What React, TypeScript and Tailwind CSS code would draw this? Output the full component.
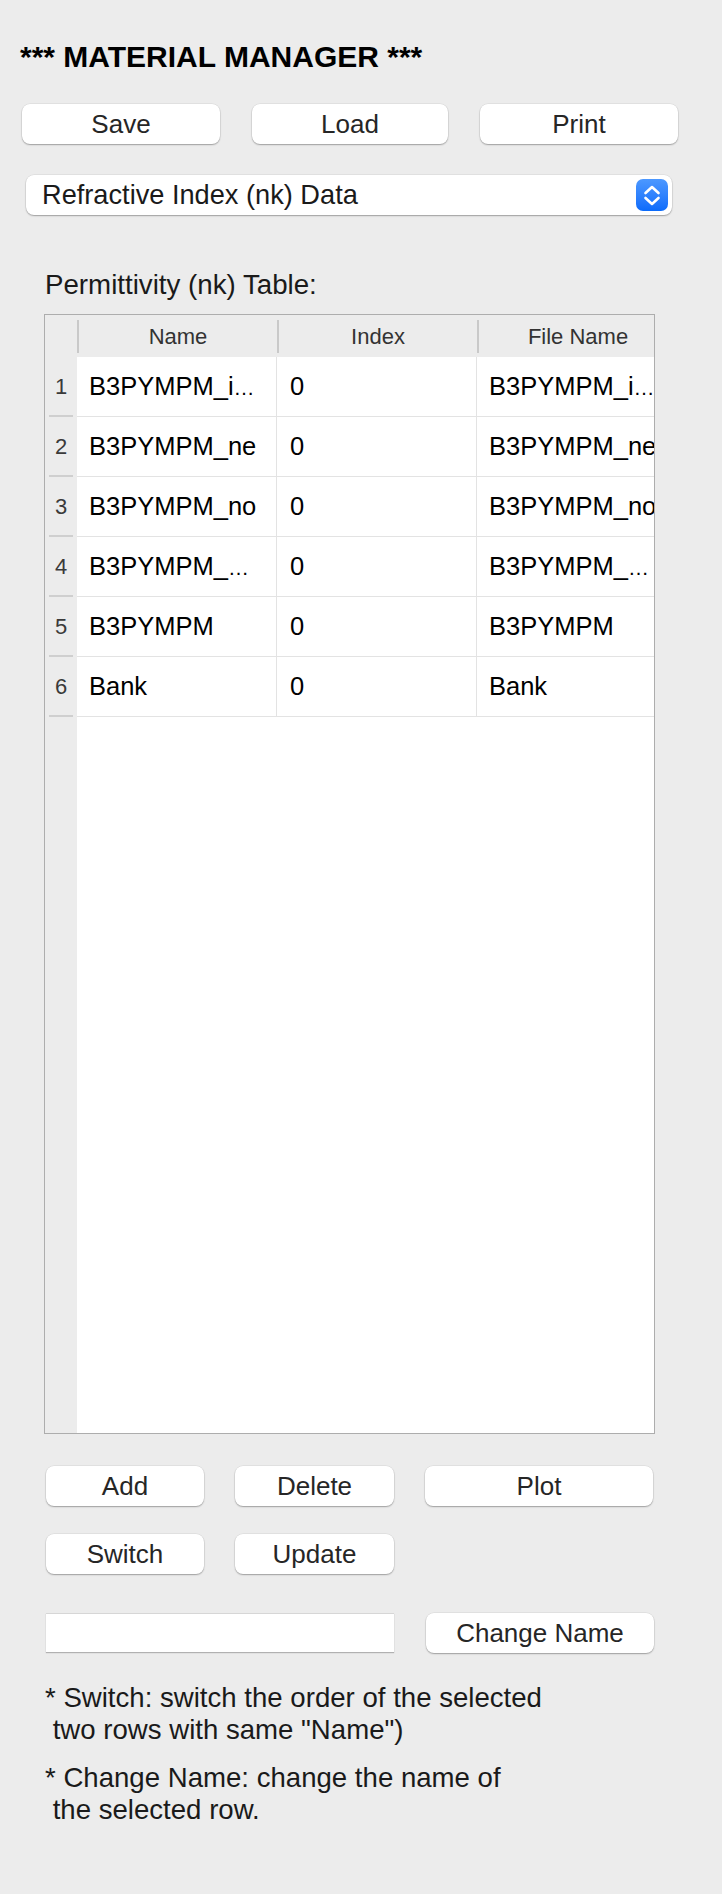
import React from "react";

const rows = [
	{ n: 1, name: "B3PYMPM_i", nameCut: true, idx: "0", file: "B3PYMPM_i", fileCut: true },
	{ n: 2, name: "B3PYMPM_ne", nameCut: false, idx: "0", file: "B3PYMPM_ne", fileCut: false },
	{ n: 3, name: "B3PYMPM_no", nameCut: false, idx: "0", file: "B3PYMPM_no", fileCut: false },
	{ n: 4, name: "B3PYMPM_", nameCut: true, idx: "0", file: "B3PYMPM_", fileCut: true },
	{ n: 5, name: "B3PYMPM", nameCut: false, idx: "0", file: "B3PYMPM", fileCut: false },
	{ n: 6, name: "Bank", nameCut: false, idx: "0", file: "Bank", fileCut: false },
];

const font = { fontFamily: '"Liberation Sans", Arial, sans-serif' };

const Btn = ({ label, className }: { label: string; className: string }) => (
	<button
		className={`${className} h-[40px] bg-white rounded-[8px] text-[26px] leading-none text-[#262626] shadow-[0_1px_1.5px_rgba(0,0,0,0.3),0_0_0_0.5px_rgba(0,0,0,0.08)] flex items-center justify-center`}
	>
		{label}
	</button>
);

const HeadCell = ({ label }: { label: string }) => (
	<div className="w-[200px] shrink-0 flex items-center">
		<div className="w-[2px] h-[33px] bg-[#c9c9c9]" />
		<div className="flex-1 text-center text-[22px] text-[#333]">{label}</div>
	</div>
);

const CellText = ({ text, cut }: { text: string; cut: boolean }) => (
	<span>
		{text}
		{cut && <span className="text-[21px]">…</span>}
	</span>
);

const App = () => {
	return (
		<div className="w-[722px] min-h-[1894px] bg-[#ececec] text-black" style={font}>
			<div className="pt-[42px] pl-[20px] text-[30px] leading-[30px] font-bold">*** MATERIAL MANAGER ***</div>

			<div className="flex mt-[32px] pl-[22px] gap-[32px]">
				<Btn label="Save" className="w-[198px]" />
				<Btn label="Load" className="w-[196px]" />
				<Btn label="Print" className="w-[198px]" />
			</div>

			<div className="ml-[26px] mt-[31px] w-[646px] h-[40px] bg-white rounded-[8px] shadow-[0_1px_1.5px_rgba(0,0,0,0.3),0_0_0_0.5px_rgba(0,0,0,0.08)] flex items-center pl-[16px] pr-[4px]">
				<span className="flex-1 text-[27.2px] text-[#1a1a1a]">Refractive Index (nk) Data</span>
				<div className="w-[32px] h-[32px] rounded-[7px] bg-gradient-to-b from-[#4c98ff] to-[#0a6bfb] flex items-center justify-center">
					<svg width="32" height="32" viewBox="0 0 32 32" fill="none" stroke="white" strokeWidth="2.6" strokeLinecap="round" strokeLinejoin="round">
						<path d="M9.5 14 L16 8 L22.5 14" />
						<path d="M9.5 19 L16 25 L22.5 19" />
					</svg>
				</div>
			</div>

			<div className="mt-[55px] pl-[45px] text-[27.7px] leading-[30px] text-[#1a1a1a]">Permittivity (nk) Table:</div>

			{/* table */}
			<div className="ml-[44px] mt-[14px] w-[611px] h-[1120px] border border-[#adadad] overflow-hidden flex flex-col">
				<div className="flex h-[42px] shrink-0 bg-[#ececec]">
					<div className="w-[32px] shrink-0" />
					<HeadCell label="Name" />
					<HeadCell label="Index" />
					<HeadCell label="File Name" />
				</div>
				<div className="flex flex-1">
					<div className="w-[32px] shrink-0 bg-[#ececec] flex flex-col">
						{rows.map((r) => (
							<div key={r.n} className="h-[60px] flex flex-col">
								<div className="flex-1 flex items-center justify-center text-[22px] text-[#3a3a3a]">{r.n}</div>
								<div className="mx-[4px] h-[2px] bg-[#cfcfcf]" />
							</div>
						))}
					</div>
					<div className="flex-1 bg-white flex flex-col overflow-hidden">
						{rows.map((r) => (
							<div key={r.n} className="h-[60px] flex border-b border-[#e3e3e3] text-[25.5px] whitespace-nowrap">
								<div className="w-[200px] shrink-0 px-[12px] flex items-center border-r border-[#e3e3e3]">
									<CellText text={r.name} cut={r.nameCut} />
								</div>
								<div className="w-[200px] shrink-0 px-[13px] flex items-center border-r border-[#e3e3e3]">{r.idx}</div>
								<div className="w-[200px] shrink-0 px-[12px] flex items-center">
									<CellText text={r.file} cut={r.fileCut} />
								</div>
							</div>
						))}
					</div>
				</div>
			</div>

			<div className="flex mt-[32px] pl-[46px] gap-[31px]">
				<Btn label="Add" className="w-[158px]" />
				<Btn label="Delete" className="w-[159px]" />
				<Btn label="Plot" className="w-[228px]" />
			</div>
			<div className="flex mt-[28px] pl-[46px] gap-[31px]">
				<Btn label="Switch" className="w-[158px]" />
				<Btn label="Update" className="w-[159px]" />
			</div>

			<div className="flex mt-[39px] pl-[46px] gap-[32px] items-start">
				<div className="w-[348px] h-[39px] bg-white border-t border-[#d6d6d6] shadow-[0_1px_1px_rgba(0,0,0,0.25)]" />
				<Btn label="Change Name" className="w-[228px]" />
			</div>

			<div className="mt-[29px] pl-[45px] text-[27.6px] leading-[32px] text-[#1a1a1a] whitespace-pre">
				<div>{"* Switch: switch the order of the selected\n two rows with same \"Name\")"}</div>
				<div className="mt-[16px]">{"* Change Name: change the name of\n the selected row."}</div>
			</div>
		</div>
	);
};

export default App;
